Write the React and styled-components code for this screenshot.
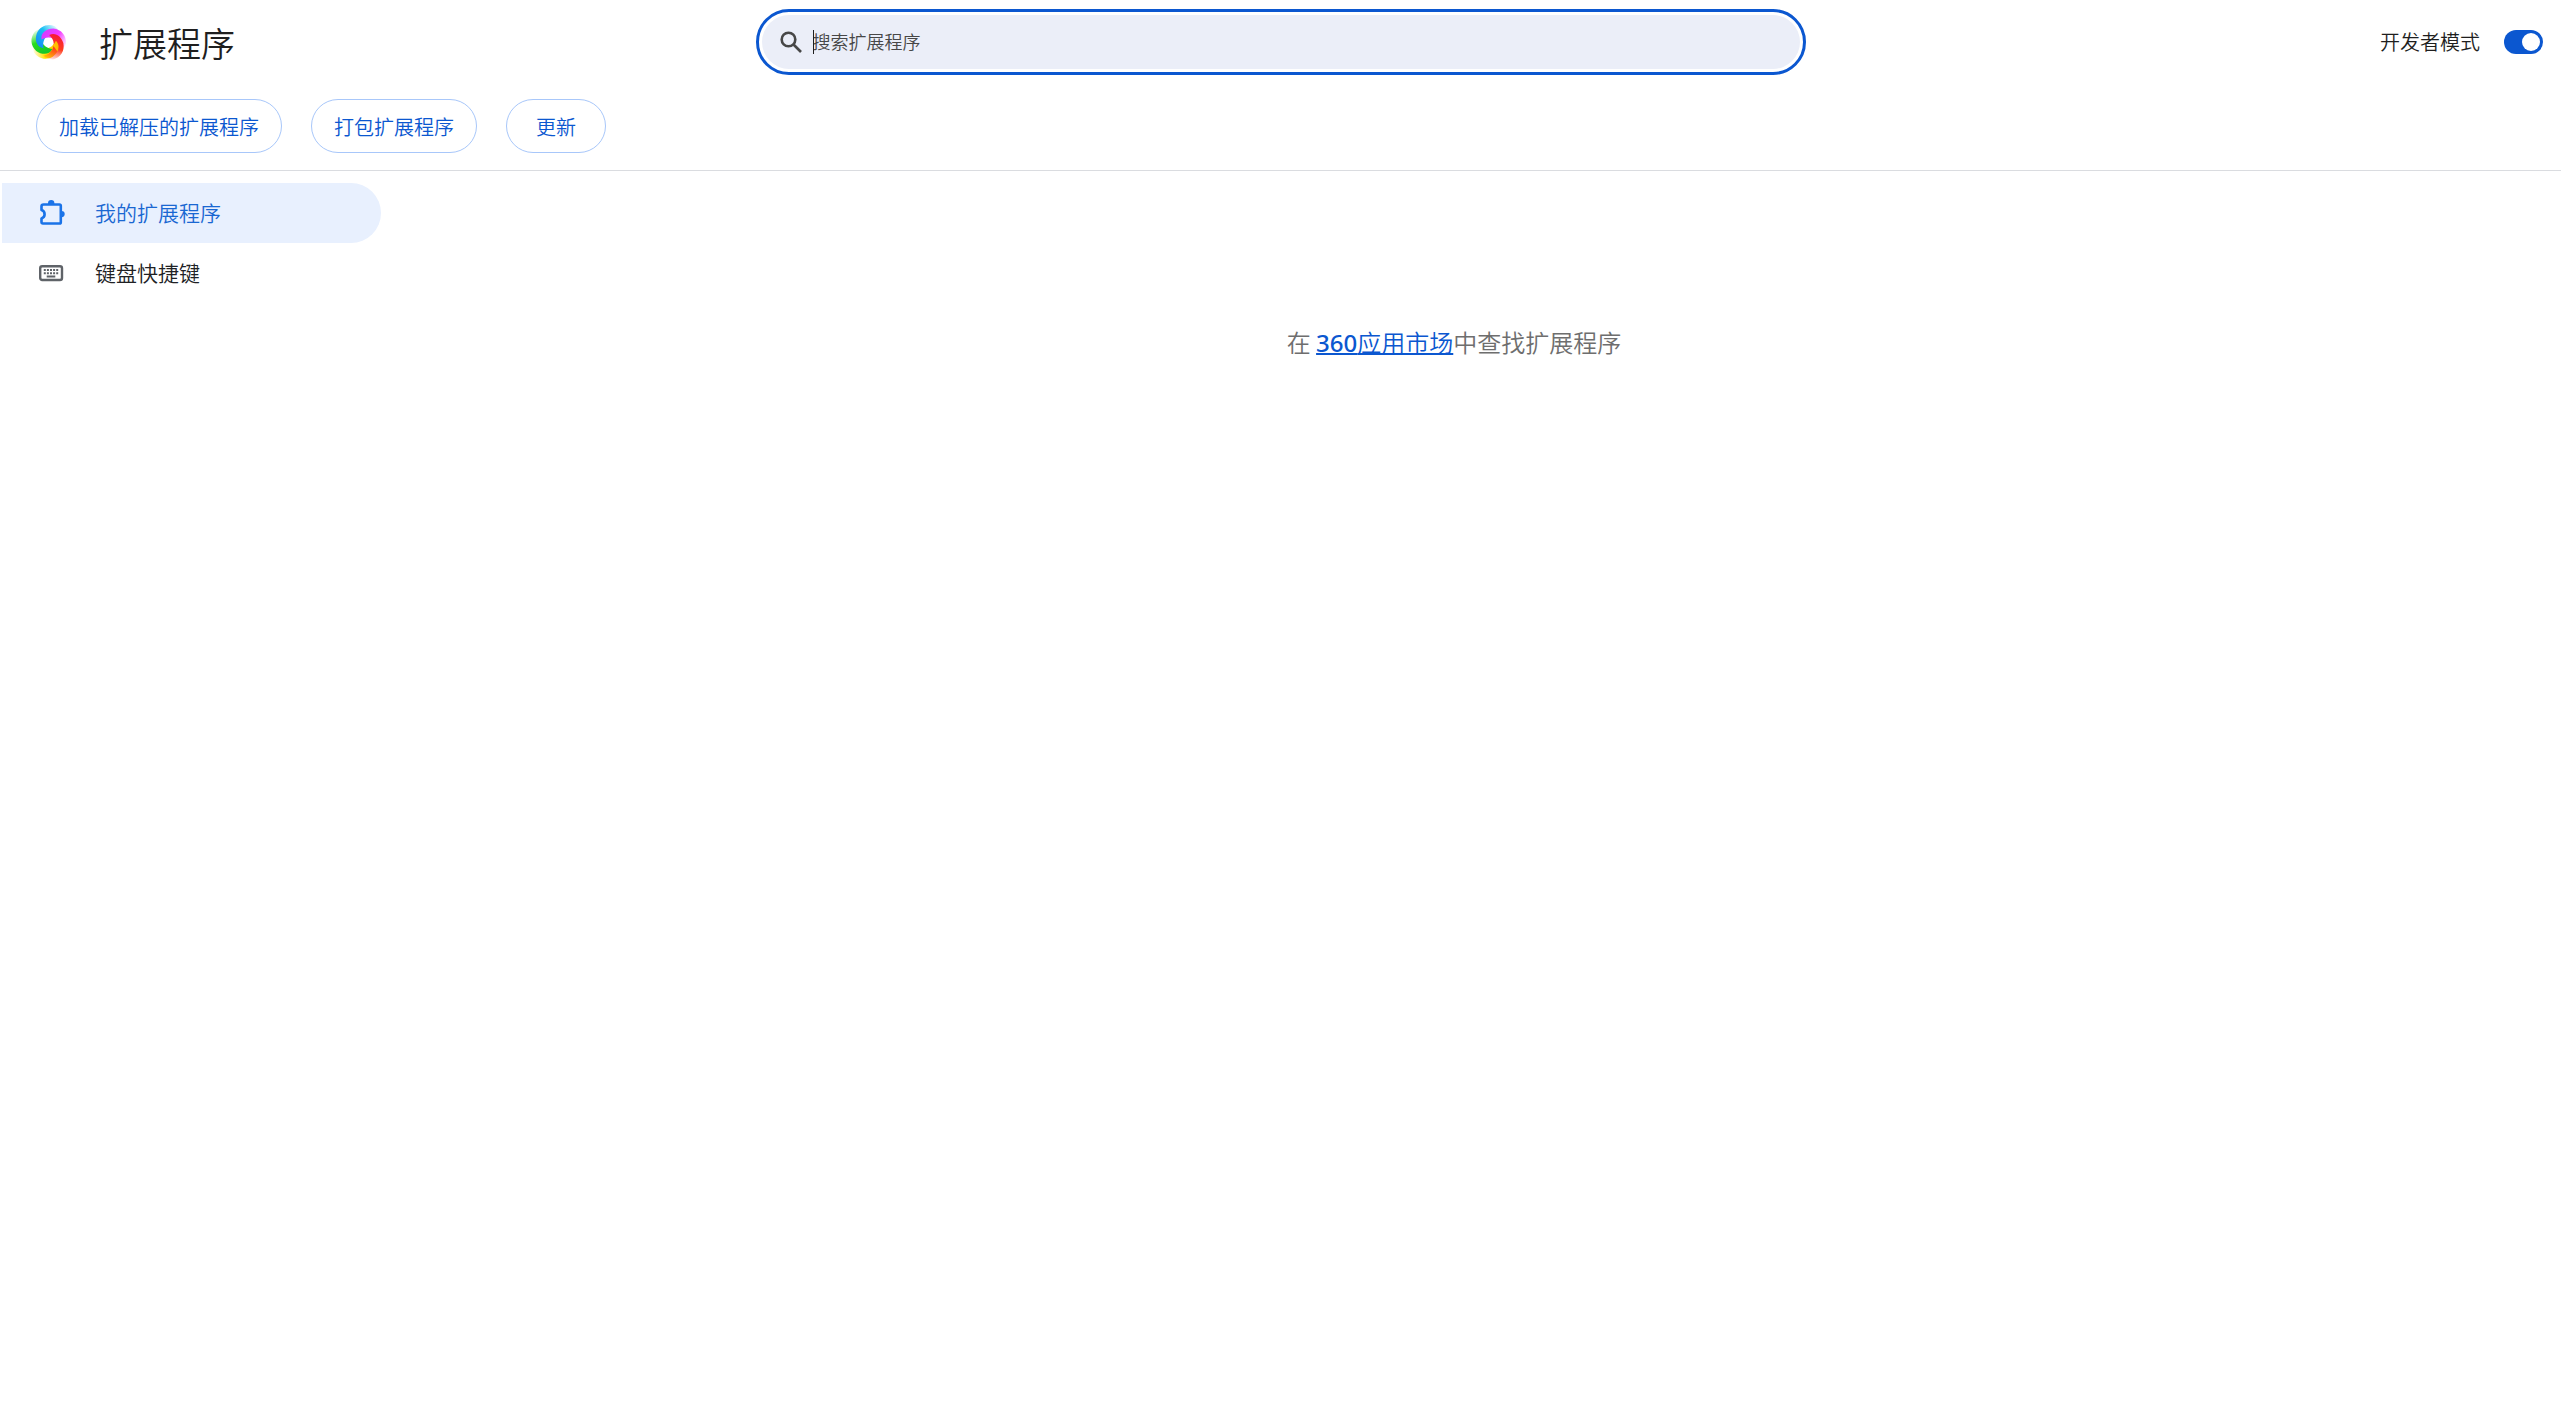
import { useState } from "react";
import styled, { createGlobalStyle } from "styled-components";

const GlobalStyle = createGlobalStyle`
  * {
    box-sizing: border-box;
  }
  body {
    margin: 0;
    background-color: #fff;
    color: #1f1f1f;
    font-family: "Noto Sans CJK SC", "Noto Sans", sans-serif;
    font-weight: 350;
  }
  button,
  input {
    font: inherit;
  }
`;

const Header = styled.header`
  border-bottom: 1px solid #dadce0;
`;
const Toolbar = styled.div`
  display: grid;
  grid-template-columns: 1fr minmax(0, 1038px) 1fr;
  align-items: center;
  height: 84px;
  padding: 0 18px;
`;
const Brand = styled.div`
  display: flex;
  align-items: center;
  gap: 32px;
  padding-left: 12px;
`;
const Title = styled.h1`
  margin: 0;
  padding-top: 2px;
  font-size: 34px;
  font-weight: 350;
  line-height: 48px;
  white-space: nowrap;
`;
const SearchField = styled.div`
  display: flex;
  align-items: center;
  gap: 8px;
  height: 54px;
  padding: 0 24px 0 16px;
  border-radius: 27px;
  background-color: #ebeef8;
  outline: 3px solid #0b57d0;
  outline-offset: 3px;
  color: #474747;
`;
const InputWrapper = styled.div`
  position: relative;
  flex: 1;
  display: flex;
`;
const Caret = styled.span`
  position: absolute;
  left: 0;
  top: 0;
  width: 1px;
  height: 24px;
  background-color: #1f1f1f;
`;
const SearchInput = styled.input`
  width: 100%;
  height: 24px;
  padding: 0 0 2px;
  border: none;
  outline: none;
  background: transparent;
  color: #1f1f1f;
  font-size: 18px;
  line-height: 22px;
  &::placeholder {
    color: #474747;
    opacity: 1;
  }
`;
const DevMode = styled.label`
  display: flex;
  align-items: center;
  justify-content: flex-end;
  gap: 24px;
  font-size: 20px;
  line-height: 30px;
  white-space: nowrap;
`;
const Switch = styled.input`
  appearance: none;
  display: flex;
  align-items: center;
  justify-content: ${(props) => (props.checked ? "flex-end" : "flex-start")};
  width: 39px;
  height: 24px;
  margin: 0;
  padding: 3px;
  border-radius: 12px;
  background-color: ${(props) => (props.checked ? "#0b57d0" : "#747775")};
  &::before {
    content: "";
    width: 18px;
    height: 18px;
    border-radius: 50%;
    background-color: #fff;
  }
`;
const Actions = styled.div`
  display: flex;
  gap: 29px;
  padding: 15px 36px 17px;
`;
const ActionButton = styled.button`
  min-width: 100px;
  height: 54px;
  padding: 0 22px;
  border: 1px solid #a8c7fa;
  border-radius: 27px;
  background-color: #fff;
  color: #0b57d0;
  font-size: 20px;
`;
const Body = styled.div`
  display: flex;
`;
const Sidebar = styled.nav`
  flex: 0 0 383px;
  padding: 12px 2px 0;
`;
const NavItem = styled.a`
  display: flex;
  align-items: center;
  gap: 29px;
  height: 60px;
  padding: 0 0 2px 37px;
  border-radius: 0 30px 30px 0;
  background-color: ${(props) => (props.$active ? "#e8f0fe" : "transparent")};
  color: ${(props) => (props.$active ? "#1967d2" : "#202124")};
  font-size: 21px;
  text-decoration: none;
  svg {
    color: ${(props) => (props.$active ? "#1a73e8" : "#5f6368")};
  }
`;
const Main = styled.main`
  flex: 1;
  padding: 153px 36px 0 0;
`;
const EmptyMessage = styled.p`
  margin: 0;
  color: #6e6e6e;
  font-size: 24px;
  line-height: 36px;
  text-align: center;
`;
const StoreLink = styled.a`
  color: #0b57d0;
  text-decoration-thickness: 2px;
`;
const Digits = styled.span`
  font-family: "Noto Sans", sans-serif;
  font-weight: 500;
`;

// each blade sweeps clockwise from its head and fades out at the tail
const blades = [
  { id: "yellow", from: "#ffae00", to: "#ffe100", angle: 144 },
  { id: "green", from: "#10bf30", to: "#27dd1e", angle: 216 },
  { id: "blue", from: "#1680f4", to: "#18c0f4", angle: 288 },
  { id: "magenta", from: "#cf3cff", to: "#f43cff", angle: 0 },
  { id: "red", from: "#f5123c", to: "#ff3c1e", angle: 72 },
];
const bladePath =
  "M-7 -3C-8 -10-2 -14 5 -14C13 -13 18 -7 17.500 1C16 5 14 7 11 9C12 2 7 -5 0 -5C-3 -5-5 -4-7 -3Z";

const SoftGroup = styled.g`
  filter: blur(0.5px);
`;

const Logo = () => (
  <svg width="37" height="37" viewBox="-18.5 -18.5 37 37" aria-hidden="true">
    <defs>
      <clipPath id="head">
        <rect x="-19" y="-19" width="17" height="38" />
      </clipPath>
      {blades.map((blade) => (
        <linearGradient
          key={blade.id}
          id={blade.id}
          gradientUnits="userSpaceOnUse"
          x1="-7"
          y1="-12"
          x2="18"
          y2="4"
        >
          <stop offset="0" stopColor={blade.from} />
          <stop offset="0.55" stopColor={blade.to} />
          <stop offset="1" stopColor={blade.to} stopOpacity="0" />
        </linearGradient>
      ))}
    </defs>
    <SoftGroup>
      {blades.map((blade) => (
        <path
          key={blade.id}
          transform={`rotate(${blade.angle})`}
          fill={`url(#${blade.id})`}
          d={bladePath}
        />
      ))}
      {/* the first blade's head lies over the last blade's tail */}
      <g transform="rotate(144)">
        <path clipPath="url(#head)" fill="url(#yellow)" d={bladePath} />
      </g>
    </SoftGroup>
  </svg>
);

const SearchIcon = () => (
  <svg
    width="27"
    height="27"
    viewBox="0 0 27 27"
    fill="none"
    stroke="currentColor"
    strokeWidth="2.6"
    aria-hidden="true"
  >
    <circle cx="10.500" cy="10.500" r="6.800" />
    <path d="M15.500 15.500L23 23" />
  </svg>
);

const ExtensionIcon = () => (
  <svg width="27" height="27" viewBox="0 0 27 27" aria-hidden="true">
    <path
      d="M4.500 5.500H20.500Q21.800 5.500 21.800 6.800V23.200Q21.800 24.500 20.500 24.500H4Q2.500 24.500 2.500 23V19.500Q5.600 18.500 5.600 15.300Q5.600 12 2.500 11V7.500Q2.500 5.500 4.500 5.500Z"
      fill="none"
      stroke="currentColor"
      strokeWidth="2.6"
      strokeLinejoin="round"
    />
    <path
      d="M9 5V4.200A3.200 3.200 0 0 1 15.400 4.200V5ZM22 12H22.600A3.100 3.100 0 0 1 22.600 18.200H22Z"
      fill="currentColor"
    />
  </svg>
);

const KeyboardIcon = () => (
  <svg width="27" height="27" viewBox="0 0 27 27" aria-hidden="true">
    <rect
      x="1.200"
      y="7.200"
      width="21.800"
      height="13.800"
      rx="2"
      fill="none"
      stroke="currentColor"
      strokeWidth="2.400"
    />
    <path
      d="M4.800 11h2M7.900 11h2M11 11h2M14.100 11h2M17.200 11h2M4.800 14.200h2M7.900 14.200h2M11 14.200h2M14.100 14.200h2M17.200 14.200h2M7.700 17.600h8.600"
      fill="none"
      stroke="currentColor"
      strokeWidth="2"
    />
  </svg>
);

const navItems = [
  { label: "我的扩展程序", Icon: ExtensionIcon, active: true },
  { label: "键盘快捷键", Icon: KeyboardIcon, active: false },
];

const App = () => {
  const [devMode, setDevMode] = useState(true);
  const [query, setQuery] = useState("");

  return (
    <>
      <GlobalStyle />
      <Header>
        <Toolbar>
          <Brand>
            <Logo />
            <Title>扩展程序</Title>
          </Brand>
          <SearchField>
            <SearchIcon />
            <InputWrapper>
              <SearchInput
                type="text"
                aria-label="搜索扩展程序"
                placeholder="搜索扩展程序"
                value={query}
                onChange={(e) => setQuery(e.target.value)}
              />
              {!query && <Caret />}
            </InputWrapper>
          </SearchField>
          <DevMode>
            开发者模式
            <Switch
              type="checkbox"
              checked={devMode}
              onChange={(e) => setDevMode(e.target.checked)}
            />
          </DevMode>
        </Toolbar>
        {devMode && (
          <Actions>
            <ActionButton>加载已解压的扩展程序</ActionButton>
            <ActionButton>打包扩展程序</ActionButton>
            <ActionButton>更新</ActionButton>
          </Actions>
        )}
      </Header>
      <Body>
        <Sidebar>
          {navItems.map(({ label, Icon, active }) => (
            <NavItem key={label} href="#" $active={active}>
              <Icon />
              {label}
            </NavItem>
          ))}
        </Sidebar>
        <Main>
          <EmptyMessage>
            在{" "}
            <StoreLink href="#">
              <Digits>360</Digits>应用市场
            </StoreLink>
            中查找扩展程序
          </EmptyMessage>
        </Main>
      </Body>
    </>
  );
};

export default App;
